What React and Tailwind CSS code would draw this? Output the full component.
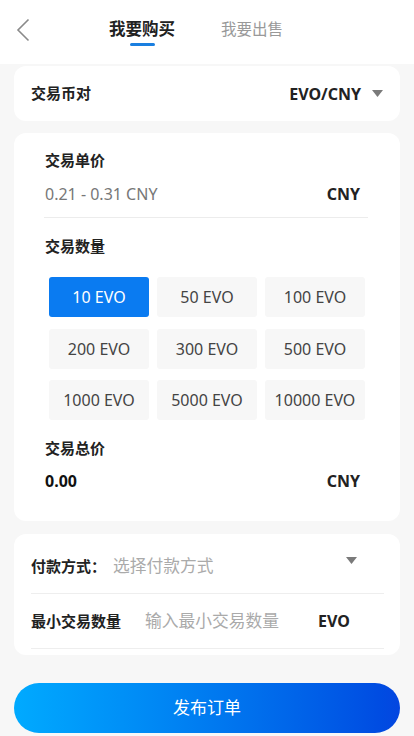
const amounts = ["10 EVO", "50 EVO", "100 EVO", "200 EVO", "300 EVO", "500 EVO", "1000 EVO", "5000 EVO", "10000 EVO"];

const Caret = ({ className }) => (
    <svg width="11" height="7" viewBox="0 0 11 7" className={className}>
        <path d="M0 0 H11 L5.5 7 Z" fill="#7a7a7a" />
    </svg>
);

const App = () => {
    const selected = 0;

    return (
        <div
            className="min-h-screen bg-[#f7f7f7] text-[#222]"
            style={{ fontFamily: '"Noto Sans", "Noto Sans CJK SC", sans-serif' }}
        >
            {/* Header tabs */}
            <div className="h-[64px] bg-white flex items-center px-[16px]">
                <svg width="14" height="24" viewBox="0 0 14 24" className="mt-[-4px]">
                    <path d="M12.5 1.5 L2 12 L12.5 22.5" fill="none" stroke="#8a8a8a" strokeWidth="1.6" />
                </svg>
                <div className="ml-[79px] flex flex-col items-center">
                    <span className="text-[16.5px] font-bold leading-[22px] text-[#222]">我要购买</span>
                    <span className="mt-[3px] w-[25px] h-[3px] rounded-full bg-[#1a7fe0]"></span>
                </div>
                <span className="ml-[46px] mb-[6px] text-[15.5px] leading-[22px] text-[#999]">我要出售</span>
            </div>

            {/* Pair */}
            <div className="mt-[2px] mx-[14px] h-[55px] bg-white rounded-[12px] px-[17px] flex items-center justify-between">
                <span className="text-[15px] font-bold">交易币对</span>
                <div className="flex items-center gap-[11px]">
                    <span className="text-[16px] font-bold">EVO/CNY</span>
                    <Caret />
                </div>
            </div>

            {/* Price / amount */}
            <div className="mt-[12px] mx-[14px] bg-white rounded-[12px] pl-[30px] pr-[32px] pt-[17px] pb-[29px]">
                <div className="pl-[1px] h-[20px] leading-[20px] text-[15px] font-bold">交易单价</div>
                <div className="mt-[12px] h-[24px] flex items-center justify-between pl-[1px] pr-[8px]">
                    <span className="text-[16px] text-[#777]">0.21 - 0.31 CNY</span>
                    <span className="text-[16px] font-bold">CNY</span>
                </div>
                <div className="mt-[11px] h-px bg-[#ececec]"></div>
                <div className="mt-[18px] pl-[1px] h-[20px] leading-[20px] text-[15px] font-bold">交易数量</div>
                <div className="mt-[21px] ml-[5px] grid grid-cols-3 gap-x-[8px] gap-y-[11.5px] w-[316px]">
                    {amounts.map((a, i) => (
                        <div
                            key={a}
                            className={
                                i === selected
                                    ? "h-[40px] rounded-[3px] bg-[#0a7bf1] text-white text-[16px] flex items-center justify-center"
                                    : "h-[40px] rounded-[3px] bg-[#f7f7f7] text-[#444] text-[16px] flex items-center justify-center"
                            }
                        >
                            {a}
                        </div>
                    ))}
                </div>
                <div className="mt-[18px] pl-[1px] h-[20px] leading-[20px] text-[15px] font-bold">交易总价</div>
                <div className="mt-[12px] h-[22px] flex items-center justify-between pl-[1px] pr-[8px]">
                    <span className="text-[16px] font-bold text-[#111]">0.00</span>
                    <span className="text-[16px] font-bold">CNY</span>
                </div>
            </div>

            {/* Payment */}
            <div className="mt-[13px] mx-[14px] bg-white rounded-[12px] pl-[17px] pr-[16px] pt-[5px] pb-[6px]">
                <div className="h-[55px] border-b border-[#eeeeee] flex items-center">
                    <span className="text-[15px] font-bold">付款方式：</span>
                    <span className="ml-[7px] text-[16.75px] text-[#aaa]">选择付款方式</span>
                    <Caret className="ml-auto mr-[27px] mt-[-12px]" />
                </div>
                <div className="h-[55px] border-b border-[#eeeeee] flex items-center">
                    <span className="text-[15px] font-bold">最小交易数量</span>
                    <span className="ml-[24px] text-[16.75px] text-[#aaa]">输入最小交易数量</span>
                    <span className="ml-[39px] text-[16px] font-bold">EVO</span>
                </div>
            </div>

            {/* Submit */}
            <div className="mx-[14px] mt-[28px] pb-[3px]">
                <button className="w-full h-[50px] rounded-full bg-gradient-to-r from-[#00aaff] to-[#0446e0] text-white text-[17px] flex items-center justify-center">
                    发布订单
                </button>
            </div>
        </div>
    );
};

export default App;
